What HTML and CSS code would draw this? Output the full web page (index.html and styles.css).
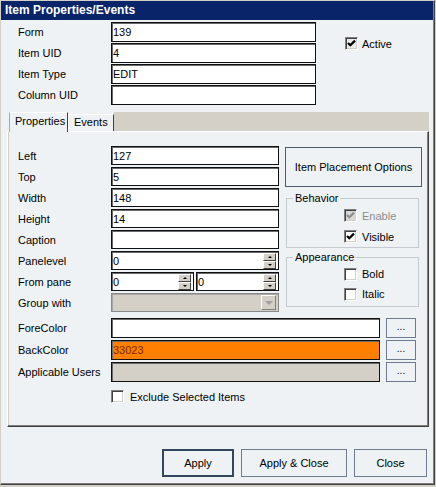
FILE: index.html
```html
<!DOCTYPE html>
<html lang="en">
<head>
    <meta charset="UTF-8">
    <meta name="viewport" content="width=device-width, initial-scale=1.0">
    <title>Item Properties/Events</title>
    <link rel="stylesheet" href="styles.css">
</head>
<body>
    <div class="window">
        <div class="titlebar">Item Properties/Events</div>

        <div class="header">
            <div class="fields">
                <div class="row"><label>Form</label><input class="text head-input" value="139" readonly></div>
                <div class="row"><label>Item UID</label><input class="text head-input" value="4" readonly></div>
                <div class="row"><label>Item Type</label><input class="text head-input" value="EDIT" readonly></div>
                <div class="row"><label>Column UID</label><input class="text head-input" value="" readonly></div>
            </div>
            <div class="active">
                <span class="check checked soft">
                    <svg width="11" height="11" viewBox="0 0 11 11"><path d="M2 5 L4.3 7.3 L9 2.6" stroke="#000" stroke-width="2.2" fill="none"/></svg>
                </span>
                Active
            </div>
        </div>

        <!-- Tabs -->
        <div class="tabstrip">
            <div class="tab selected">Properties</div>
            <div class="tab">Events</div>
            <div class="tab-fill"></div>
        </div>

        <div class="panel">
            <div class="panel-top">
                <div class="props">
                    <div class="prow"><label>Left</label><input class="text prop-input" value="127" readonly></div>
                    <div class="prow"><label>Top</label><input class="text prop-input" value="5" readonly></div>
                    <div class="prow"><label>Width</label><input class="text prop-input" value="148" readonly></div>
                    <div class="prow"><label>Height</label><input class="text prop-input" value="14" readonly></div>
                    <div class="prow"><label>Caption</label><input class="text prop-input" value="" readonly></div>
                    <div class="prow">
                        <label>Panelevel</label>
                        <div class="spinbox full">
                            <input value="0" readonly>
                            <div class="spin"><span class="up"></span><span class="down"></span></div>
                        </div>
                    </div>
                    <div class="prow">
                        <label>From pane</label>
                        <div class="spinbox half">
                            <input value="0" readonly>
                            <div class="spin"><span class="up"></span><span class="down"></span></div>
                        </div>
                        <div class="spinbox half">
                            <input value="0" readonly>
                            <div class="spin"><span class="up"></span><span class="down"></span></div>
                        </div>
                    </div>
                    <div class="prow">
                        <label>Group with</label>
                        <div class="select">
                            <span class="select-value"></span>
                            <span class="select-btn"></span>
                        </div>
                    </div>
                </div>

                <div class="side">
                    <button class="placement">Item Placement Options</button>
                    <fieldset class="group behavior">
                        <legend>Behavior</legend>
                        <div class="opt">
                            <span class="check checked disabled">
                                <svg width="11" height="11" viewBox="0 0 11 11"><path d="M2 5 L4.3 7.3 L9 2.6" stroke="#8c8c8c" stroke-width="2.2" fill="none"/></svg>
                            </span>
                            <span class="muted">Enable</span>
                        </div>
                        <div class="opt">
                            <span class="check checked">
                                <svg width="11" height="11" viewBox="0 0 11 11"><path d="M2 5 L4.3 7.3 L9 2.6" stroke="#000" stroke-width="2.2" fill="none"/></svg>
                            </span>
                            Visible
                        </div>
                    </fieldset>
                    <fieldset class="group appearance">
                        <legend>Appearance</legend>
                        <div class="opt"><span class="check"></span>Bold</div>
                        <div class="opt"><span class="check"></span>Italic</div>
                    </fieldset>
                </div>
            </div>

            <div class="colors">
                <div class="crow">
                    <label>ForeColor</label>
                    <input class="text color-input" value="" readonly>
                    <button class="dots">...</button>
                </div>
                <div class="crow">
                    <label>BackColor</label>
                    <input class="text color-input orange" value="33023" readonly>
                    <button class="dots">...</button>
                </div>
                <div class="crow">
                    <label>Applicable Users</label>
                    <input class="text color-input grey" value="" readonly>
                    <button class="dots">...</button>
                </div>
            </div>

            <div class="exclude"><span class="check"></span>Exclude Selected Items</div>
        </div>

        <div class="footer">
            <button class="btn default" style="width:72px">Apply</button>
            <button class="btn" style="width:106px">Apply &amp; Close</button>
            <button class="btn" style="width:73px">Close</button>
        </div>
    </div>
</body>
</html>
```

FILE: styles.css
```css
* {
    box-sizing: border-box;
}
body {
    margin: 0;
    background: #d4d0c8;
    font-family: "Liberation Sans", Arial, sans-serif;
    font-size: 11px;
    color: #000;
}
input, button {
    font-family: "Liberation Sans", Arial, sans-serif;
    font-size: 11px;
    color: #000;
}
.window {
    width: 435px;
    height: 485px;
    background: #eef2f5;
    border: 1px solid;
    border-color: #d4d0c8 #404040 #404040 #d4d0c8;
    box-shadow: inset -1px -1px 0 #808080;
}
.titlebar {
    height: 19px;
    line-height: 19px;
    padding-left: 4px;
    margin-right: 1px;
    background: #0a246a;
    color: #fff;
    font-weight: bold;
    font-size: 12px;
}

/* Header fields */
.header {
    display: flex;
    margin-top: 2px;
    padding-left: 17px;
}
.fields {
    display: flex;
    flex-direction: column;
    gap: 1px;
}
.row {
    display: flex;
    align-items: center;
    height: 20px;
}
label {
    width: 93px;
    flex: none;
}
.text {
    height: 100%;
    border: 1px solid #111;
    box-shadow: inset 1px 1px 0 #6a6a6a;
    background: #fff;
    padding: 0 0 0 1px;
    outline: none;
}
.head-input {
    width: 205px;
}
.active {
    display: flex;
    align-items: center;
    gap: 4px;
    margin-left: 29px;
    padding-top: 15px;
    height: 28px;
}

/* Checkboxes */
.check {
    display: inline-flex;
    align-items: center;
    justify-content: center;
    width: 13px;
    height: 13px;
    flex: none;
    background: #fff;
    border: 1px solid;
    border-color: #808080 #fff #fff #808080;
    box-shadow: inset 1px 1px 0 #404040, inset -1px -1px 0 #d4d0c8;
}
.check svg {
    display: block;
}
.check.soft {
    background: #ececec;
}
.check.disabled {
    background: #d8d8d8;
}
.muted {
    color: #8c8c8c;
}

/* Tabs */
.tabstrip {
    display: flex;
    align-items: flex-end;
    height: 19px;
    margin: 7px 5px 0 6px;
    padding-left: 2px;
}
.tab {
    height: 17px;
    line-height: 15px;
    padding: 0 5px;
    background: #eef2f5;
    border: 1px solid;
    border-color: #fff #404040 transparent #fff;
    border-bottom: none;
}
.tab.selected {
    height: 20px;
    width: 59px;
    line-height: 17px;
    margin-bottom: -1px;
    position: relative;
    z-index: 1;
    border-left-color: #a9a9a9;
}
.tab-fill {
    flex: 1;
    height: 19px;
    background: #d4d0c8;
}

/* Tab panel */
.panel {
    height: 296px;
    margin: 0 5px 0 6px;
    padding: 14px 0 0 10px;
    border: 1px solid;
    border-color: #fff #404040 #404040 #fff;
    box-shadow: inset -1px -1px 0 #808080, inset 1px 0 0 #d4d0c8;
}
.panel-top {
    display: flex;
    gap: 6px;
}
.props {
    width: 261px;
    display: flex;
    flex-direction: column;
    gap: 2px;
}
.prow {
    display: flex;
    align-items: center;
    height: 19px;
    gap: 2px;
}
.prow label {
    margin-right: -2px;
}
.prop-input {
    width: 168px;
}

/* Spin fields */
.spinbox {
    display: flex;
    height: 19px;
    border: 1px solid #111;
    box-shadow: inset 1px 1px 0 #6a6a6a;
    background: #fff;
    padding: 1px 2px 0 0;
}
.spinbox.full {
    width: 168px;
}
.spinbox.half {
    width: 83px;
}
.spinbox input {
    flex: 1;
    min-width: 0;
    border: none;
    background: transparent;
    padding: 0 0 0 1px;
    outline: none;
}
.spin {
    display: flex;
    flex-direction: column;
    width: 13px;
}
.spin span {
    flex: 1;
    display: flex;
    align-items: center;
    justify-content: center;
    background: #d4d0c8;
    border: 1px solid;
    border-color: #fff #404040 #404040 #fff;
}
.spin .up::after {
    content: "";
    border-left: 2px solid transparent;
    border-right: 2px solid transparent;
    border-bottom: 2px solid #000;
}
.spin .down::after {
    content: "";
    border-left: 2px solid transparent;
    border-right: 2px solid transparent;
    border-top: 2px solid #000;
}

/* Disabled dropdown */
.select {
    display: flex;
    width: 168px;
    height: 19px;
    background: #d4d0c8;
    border: 1px solid #8a8a8a;
    box-shadow: inset 1px 1px 0 #a8a8a8;
    padding: 1px 2px 1px 0;
}
.select-value {
    flex: 1;
}
.select-btn {
    width: 15px;
    display: flex;
    align-items: center;
    justify-content: center;
    background: #d4d0c8;
    border: 1px solid;
    border-color: #fff #808080 #808080 #fff;
}
.select-btn::after {
    content: "";
    border-left: 4px solid transparent;
    border-right: 4px solid transparent;
    border-top: 4px solid #a0a0a0;
}

/* Right column */
.side {
    width: 137px;
}
.placement {
    display: block;
    width: 137px;
    height: 40px;
    margin-top: 1px;
    background: #eef2f5;
    border: 1px solid #4d5b6a;
    padding: 0;
}
.group {
    width: 133px;
    margin: 5px 0 0 1px;
    padding: 0;
    min-width: 0;
    border: 1px solid #c5cad1;
}
.group legend {
    margin-left: 6px;
    padding: 0 2px;
    line-height: 13px;
}
.appearance {
    margin-top: 3px;
    padding-bottom: 2px;
}
.opt {
    display: flex;
    align-items: center;
    gap: 5px;
    height: 21px;
    padding-left: 57px;
}
.appearance .opt {
    height: 20px;
}

/* Color rows */
.colors {
    display: flex;
    flex-direction: column;
    gap: 2px;
    margin-top: 6px;
}
.crow {
    display: flex;
    align-items: center;
    height: 20px;
}
.color-input {
    width: 269px;
}
.color-input.orange {
    background: #ff8000;
    color: #802800;
}
.color-input.grey {
    background: #d4d0c8;
}
.dots {
    width: 30px;
    height: 20px;
    margin-left: 6px;
    padding: 0 0 3px;
    background: #eef2f5;
    border: 1px solid #6d7b8d;
    font-size: 10px;
}
.exclude {
    display: flex;
    align-items: center;
    gap: 6px;
    height: 17px;
    margin-top: 6px;
    padding-left: 93px;
}

/* Footer buttons */
.footer {
    display: flex;
    justify-content: flex-end;
    gap: 7px;
    margin-top: 22px;
    padding-right: 7px;
}
.btn {
    height: 28px;
    background: #eef2f5;
    border: 1px solid #6d7b8d;
    padding: 0;
}
.btn.default {
    border: 2px solid #34465c;
}
```
